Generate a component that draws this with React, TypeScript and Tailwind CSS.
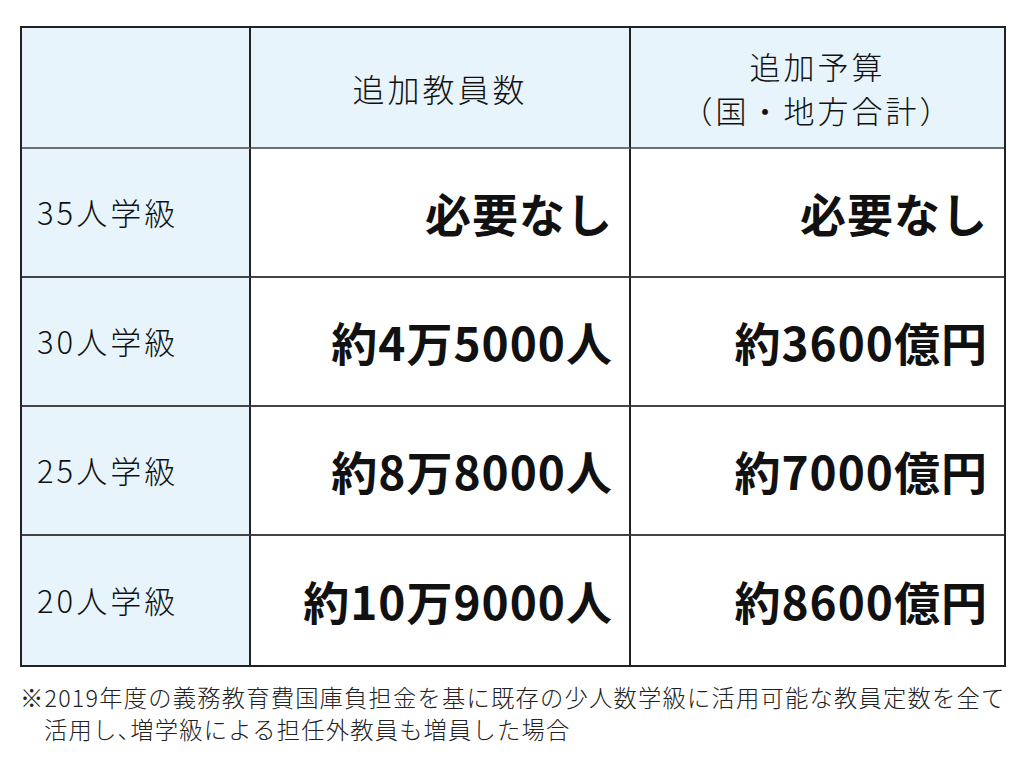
const rows = [
  { label: "35人学級", teachers: "必要なし", budget: "必要なし" },
  { label: "30人学級", teachers: "約4万5000人", budget: "約3600億円" },
  { label: "25人学級", teachers: "約8万8000人", budget: "約7000億円" },
  { label: "20人学級", teachers: "約10万9000人", budget: "約8600億円" },
];

const font = "font-['Noto_Sans_CJK_JP','Noto_Sans',sans-serif]";

export default function App() {
  return (
    <div className={`w-[1024px] h-[768px] bg-white text-[#111] ${font}`}>
      <div className="pt-[26px] pl-[20px]">
        <div className="grid w-[986px] grid-cols-[229px_380px_373px] border-2 border-[#222]">
          {/* header */}
          <div className="h-[121px] bg-[#e7f4fc] border-r-2 border-b-2 border-r-[#222] border-b-[#6f6f6f]" />
          <div className="h-[121px] bg-[#e7f4fc] border-r-2 border-b-2 border-r-[#222] border-b-[#6f6f6f] flex items-center justify-center text-[32px] tracking-[3px] font-light">
            追加教員数
          </div>
          <div className="h-[121px] bg-[#e7f4fc] border-b-2 border-b-[#6f6f6f] flex flex-col items-center justify-center text-[31px] leading-[44px] tracking-[3px] font-light">
            <span>追加予算</span>
            <span>（国・地方合計）</span>
          </div>

          {rows.map((r, i) => {
            const last = i === rows.length - 1;
            return (
              <div key={r.label} className="contents">
                <div
                  className={`h-[129px] bg-[#e7f4fc] border-r-2 border-r-[#222] flex items-center pl-[15px] text-[31px] font-light tracking-[3px] ${
                    last ? "" : "border-b-2 border-b-[#444]"
                  }`}
                >
                  {r.label}
                </div>
                <div
                  className={`h-[129px] border-r-2 border-r-[#222] flex items-center justify-end pr-[16px] text-[46px] font-bold tracking-[1px] ${
                    last ? "" : "border-b-2 border-b-[#444]"
                  }`}
                >
                  {r.teachers}
                </div>
                <div
                  className={`h-[129px] flex items-center justify-end pr-[16px] text-[46px] font-bold tracking-[1px] ${
                    last ? "" : "border-b-2 border-b-[#444]"
                  }`}
                >
                  {r.budget}
                </div>
              </div>
            );
          })}
        </div>

        <p className="mt-[14px] w-[1000px] pl-[24px] -indent-[24px] text-[23.3px] leading-[32px] tracking-[1.2px] font-light text-[#222] whitespace-nowrap">
          ※2019年度の義務教育費国庫負担金を基に既存の少人数学級に活用可能な教員定数を全て
          <br />
          活用し<span className="[font-feature-settings:'halt']">、</span>増学級による担任外教員も増員した場合
        </p>
      </div>
    </div>
  );
}
